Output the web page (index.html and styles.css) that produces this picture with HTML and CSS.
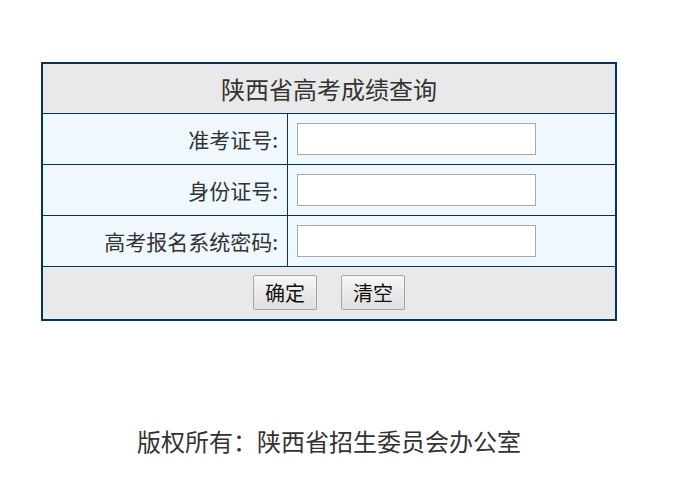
FILE: index.html
```html
<!DOCTYPE html>
<html lang="zh-CN">
<head>
<meta charset="utf-8">
<title>陕西省高考成绩查询</title>
<link rel="stylesheet" href="styles.css">
</head>
<body>
<div class="page">
  <form class="panel">
    <div class="head">陕西省高考成绩查询</div>
    <div class="row">
      <label class="label" for="zkz">准考证号:</label>
      <div class="field"><input id="zkz" class="input" type="text"></div>
    </div>
    <div class="row">
      <label class="label" for="sfz">身份证号:</label>
      <div class="field"><input id="sfz" class="input" type="text"></div>
    </div>
    <div class="row">
      <label class="label" for="mm">高考报名系统密码:</label>
      <div class="field"><input id="mm" class="input" type="password"></div>
    </div>
    <div class="foot">
      <button class="btn" type="button">确定</button>
      <button class="btn" type="reset">清空</button>
    </div>
  </form>
  <div class="copy">版权所有：陕西省招生委员会办公室</div>
</div>
</body>
</html>
```

FILE: styles.css
```css
html, body {
  margin: 0;
  padding: 0;
  background: #ffffff;
}
body {
  font-family: "Noto Sans CJK SC", "Noto Sans", sans-serif;
  color: #333333;
}
.page {
  width: 658px;
  padding-top: 62px;
}
.panel {
  width: 572px;
  margin: 0 auto;
  border: 2px solid #003366;
  display: flex;
  flex-direction: column;
}
.head {
  height: 49px;
  border-bottom: 1px solid #003366;
  background: #e9e9e9;
  font-size: 24px;
  line-height: 49px;
  text-align: center;
}
.row {
  display: grid;
  grid-template-columns: 245px 1fr;
  border-bottom: 1px solid #003366;
  background: #eff7ff;
  box-sizing: border-box;
  height: 51px;
}
.label {
  border-right: 1px solid #003366;
  font-size: 21px;
  line-height: 50px;
  text-align: right;
  padding-right: 9px;
}
.field {
  display: flex;
  align-items: center;
  padding-left: 9px;
}
.input {
  width: 239px;
  height: 32px;
  box-sizing: border-box;
  border: 1px solid #a9a9a9;
  background: #ffffff;
  margin: 0;
  padding: 0 4px;
}
.foot {
  height: 52px;
  background: #e9e9e9;
  display: flex;
  justify-content: center;
  align-items: center;
  gap: 24px;
  padding-bottom: 1px;
  box-sizing: border-box;
}
.btn {
  width: 64px;
  height: 35px;
  margin: 0;
  padding: 0;
  border: 1px solid #a6a6a6;
  border-radius: 2px;
  background: linear-gradient(#f6f6f6, #dedede);
  font-family: "Noto Sans CJK SC", "Noto Sans", sans-serif;
  font-size: 20px;
  color: #111111;
  line-height: 33px;
}
.copy {
  margin-top: 104px;
  text-align: center;
  font-size: 24px;
  line-height: 32px;
  color: #333333;
}
```
